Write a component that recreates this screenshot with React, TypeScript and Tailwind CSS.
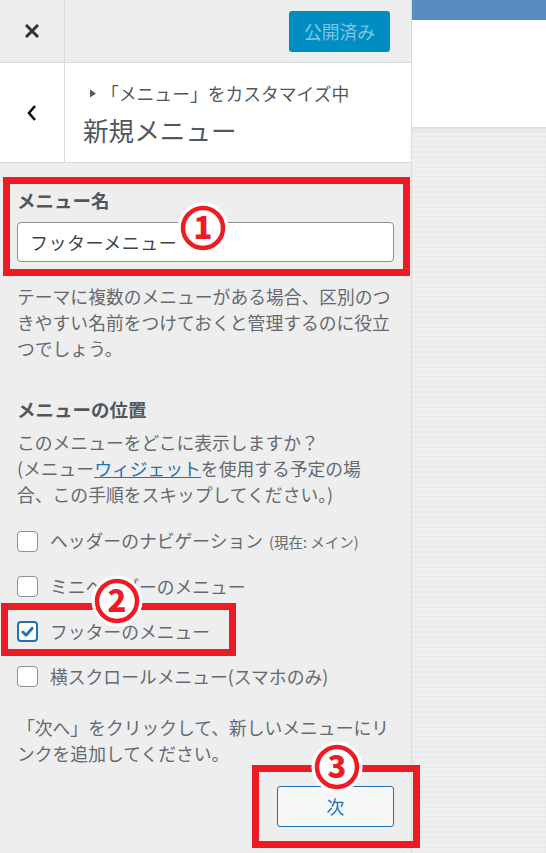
import React from "react";

const font = "font-['Noto_Sans_CJK_JP','Noto_Sans',sans-serif]";

const locations = [
  { label: "ヘッダーのナビゲーション", note: "(現在: メイン)", checked: false },
  { label: "ミニヘッダーのメニュー", note: "", checked: false },
  { label: "フッターのメニュー", note: "", checked: true },
  { label: "横スクロールメニュー(スマホのみ)", note: "", checked: false },
];

function Checkbox({ checked }: { checked: boolean }) {
  if (checked) {
    return (
      <span className="flex h-[21px] w-[21px] shrink-0 items-center justify-center rounded-[4px] border-2 border-[#2271b1] bg-white">
        <svg width="15" height="15" viewBox="0 0 16 16">
          <path d="M3 8.5 L6.5 12 L13 4.5" fill="none" stroke="#2271b1" strokeWidth="3" strokeLinecap="round" strokeLinejoin="round" />
        </svg>
      </span>
    );
  }
  return <span className="h-[21px] w-[21px] shrink-0 rounded-[4px] border border-[#8c8f94] bg-white" />;
}

function Marker({ n, className }: { n: string; className: string }) {
  return (
    <svg width="52" height="52" viewBox="0 0 52 52" className={className}>
      <circle cx="26" cy="26" r="21" fill="white" stroke="white" strokeWidth="9" />
      <circle cx="26" cy="26" r="20" fill="white" stroke="#ed1c24" strokeWidth="4.5" />
      <text x="26" y="37" textAnchor="middle" fontSize="31" fontWeight="900" fill="#ed1c24" fontFamily="'Noto Sans CJK JP', 'Noto Sans', sans-serif">
        {n}
      </text>
    </svg>
  );
}

export default function App() {
  return (
    <div className={`relative flex h-[853px] w-[546px] overflow-hidden ${font}`}>
      {/* Sidebar */}
      <div className="flex w-[412px] shrink-0 flex-col border-r border-[#dcdcde] bg-[#eeeeee] text-[#50575e]">
        {/* Top bar */}
        <div className="flex h-[63px] shrink-0 border-b border-[#dcdcde]">
          <div className="flex w-[65px] items-center justify-center border-r border-[#dcdcde]">
            <svg width="14" height="14" viewBox="0 0 14 14">
              <path d="M2 2 L12 12 M12 2 L2 12" stroke="#333" strokeWidth="3" strokeLinecap="square" />
            </svg>
          </div>
          <div className="flex flex-1 items-center justify-end pr-[21px]">
            <div className="flex h-[41px] w-[101px] items-center justify-center rounded-[3px] bg-[#008ec2] text-[17.8px] text-[#7fc4e2]">
              公開済み
            </div>
          </div>
        </div>

        {/* Section header */}
        <div className="flex h-[100px] shrink-0 border-b border-[#dcdcde] bg-white">
          <div className="flex w-[65px] items-center justify-center border-r border-[#dcdcde]">
            <svg width="12" height="18" viewBox="0 0 12 18">
              <path d="M9 2 L3 9 L9 16" fill="none" stroke="#111" strokeWidth="2.6" />
            </svg>
          </div>
          <div className="flex flex-col pl-[18px] pt-[17px]">
            <div className="flex items-center pl-[6px] text-[17.8px] leading-[26px]">
              <svg width="8" height="9" viewBox="0 0 8 9" className="mr-[4px]">
                <path d="M1 0.5 L7 4.5 L1 8.5 Z" fill="#50575e" />
              </svg>
              「メニュー」をカスタマイズ中
            </div>
            <div className="mt-[7px] text-[25.6px] leading-[34px]">新規メニュー</div>
          </div>
        </div>

        {/* Controls */}
        <div className="flex flex-col px-[17px] pt-[24px]">
          <div className="text-[18.5px] font-bold leading-[26px] text-[#50575e]">メニュー名</div>
          <div className="mt-[9px] flex h-[40px] items-center rounded-[4px] border border-[#8c8f94] bg-white px-[12px] text-[18px] tracking-[0.5px] text-[#3c434a]">
            フッターメニュー
          </div>
          <p className="mt-[21px] text-[17.8px] leading-[26px] text-[#646970]">
            テーマに複数のメニューがある場合、区別のつ
            <br />
            きやすい名前をつけておくと管理するのに役立
            <br />
            つでしょう。
          </p>

          <div className="mt-[35px] text-[18.5px] font-bold leading-[26px]">メニューの位置</div>
          <p className="mt-[7px] text-[17.8px] leading-[26px] text-[#646970]">
            このメニューをどこに表示しますか？
            <br />
            (メニュー<span className="text-[#2271b1] underline">ウィジェット</span>を使用する予定の場
            <br />
            合、この手順をスキップしてください。)
          </p>

          <div className="mt-[21px] flex flex-col gap-[19px]">
            {locations.map((loc) => (
              <div key={loc.label} className="flex h-[26px] items-center gap-[12px]">
                <Checkbox checked={loc.checked} />
                <span className="text-[17.8px] leading-[26px] text-[#646970]">
                  {loc.label}
                  {loc.note && <span className="ml-[6px] text-[14.5px]">{loc.note}</span>}
                </span>
              </div>
            ))}
          </div>

          <p className="mt-[25px] text-[17.8px] leading-[26px] text-[#646970]">
            「次へ」をクリックして、新しいメニューにリ
            <br />
            ンクを追加してください。
          </p>

          <div className="mt-[20px] flex justify-end">
            <div className="flex h-[41px] w-[117px] items-center justify-center rounded-[3px] border border-[#2271b1] bg-[#f6f7f7] text-[17.8px] text-[#2271b1]">
              次
            </div>
          </div>
        </div>
      </div>

      {/* Preview */}
      <div className="flex flex-1 flex-col">
        <div className="h-[20px] bg-[#5b8bc3]" />
        <div className="h-[107px] bg-white" />
        <div className="flex-1 bg-[#eeeeee] bg-[repeating-linear-gradient(0deg,#ebebeb_0px,#ebebeb_2px,#f0f0f0_2px,#f0f0f0_5px)] shadow-[inset_0_4px_4px_-2px_rgba(0,0,0,0.08)]" />
      </div>

      {/* Annotations */}
      <div className="absolute left-[3px] top-[177px] h-[99px] w-[407px] border-[7px] border-[#ed1c24]" />
      <div className="absolute left-[1px] top-[603px] h-[53px] w-[235px] border-[7px] border-[#ed1c24]" />
      <div className="absolute left-[252px] top-[765px] h-[83px] w-[168px] border-[7px] border-[#ed1c24]" />
      <Marker n="1" className="absolute left-[177px] top-[202px]" />
      <Marker n="2" className="absolute left-[91px] top-[575px]" />
      <Marker n="3" className="absolute left-[311px] top-[741px]" />
    </div>
  );
}
